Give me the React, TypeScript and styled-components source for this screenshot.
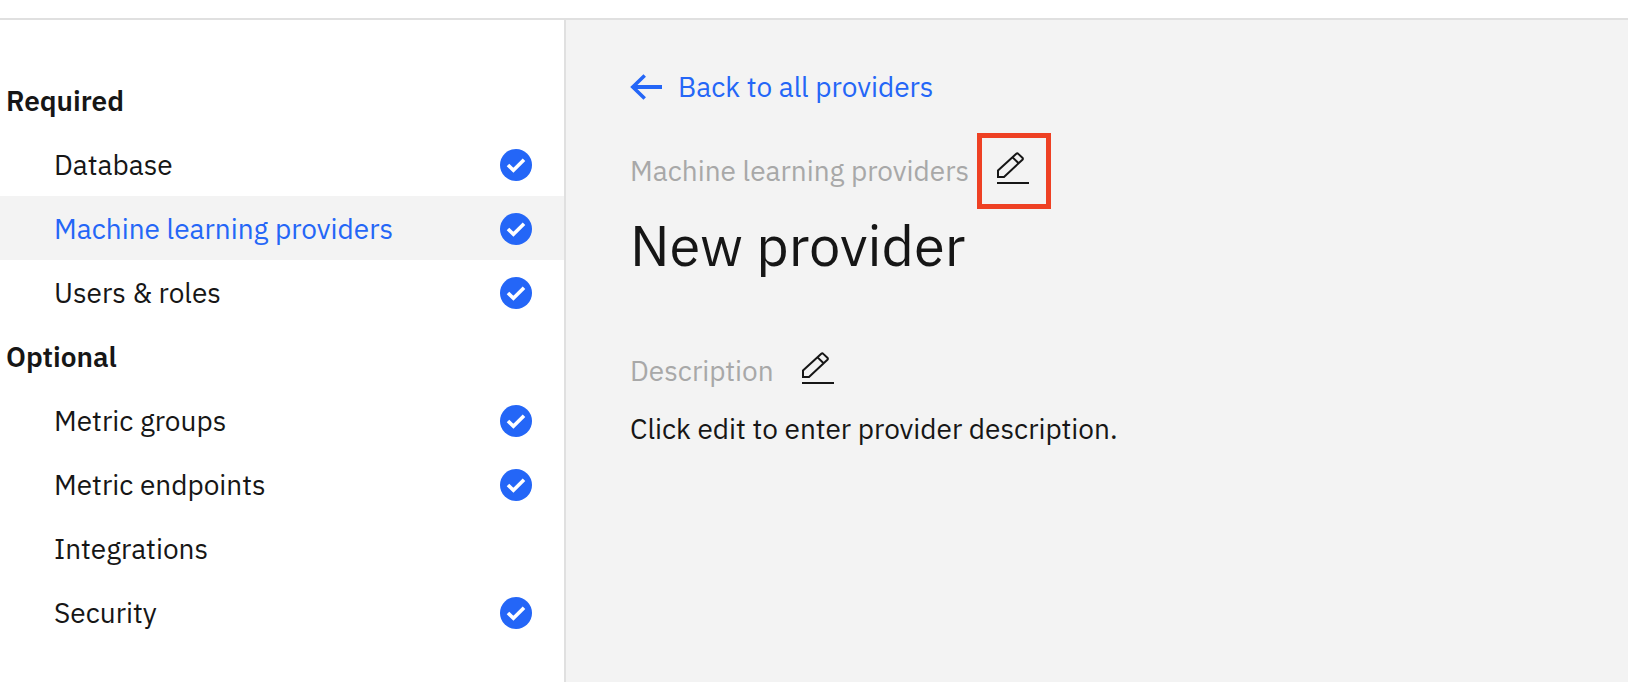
import React from "react";
import styled, { createGlobalStyle } from "styled-components";

const Global = createGlobalStyle`
  * { box-sizing: border-box; }
  body {
    margin: 0;
    background: #fff;
    color: #161616;
    font-family: "IBM Plex Sans", "Noto Sans", sans-serif;
    font-size: 28px;
    line-height: 36px;
  }
`;

const Page = styled.div`
  min-height: 100vh;
  display: flex;
  flex-direction: column;
`;

const TopBar = styled.header`
  height: 20px;
  border-bottom: 2px solid #e0e0e0;
`;

const Body = styled.div`
  flex: 1;
  display: flex;
`;

const Sidebar = styled.nav`
  flex: 0 0 566px;
  padding: 48px 0 36px;
  border-right: 2px solid #e0e0e0;
`;

const GroupTitle = styled.h2`
  margin: 0;
  padding: 15px 6px 13px;
  font-size: 28px;
  line-height: 36px;
  font-weight: 600;
`;

const List = styled.ul`
  margin: 0;
  padding: 0;
  list-style: none;
`;

const NavLink = styled.a<{ $active?: boolean }>`
  display: flex;
  align-items: center;
  justify-content: space-between;
  height: 64px;
  padding: 2px 32px 0 54px;
  color: ${(p) => (p.$active ? "#2466f7" : "#161616")};
  background: ${(p) => (p.$active ? "#f3f3f3" : "transparent")};
  text-decoration: none;
`;

const Main = styled.main`
  flex: 1;
  min-width: 0;
  padding: 49px 64px;
  background: #f3f3f3;
`;

const BackLink = styled.a`
  display: flex;
  align-items: center;
  gap: 16px;
  width: fit-content;
  margin-bottom: 28px;
  color: #2466f7;
  text-decoration: none;
`;

const LabelRow = styled.div`
  display: flex;
  align-items: center;
  gap: 8px;
  height: 76px;
`;

const Label = styled.span`
  color: #a8a8a8;
`;

const EditButton = styled.button<{ $highlighted?: boolean }>`
  display: flex;
  align-items: center;
  justify-content: center;
  width: 74px;
  height: 76px;
  padding: 0 2px 6px 0;
  border: 5px solid ${(p) => (p.$highlighted ? "#ee4023" : "transparent")};
  background: none;
  color: #161616;
`;

const Title = styled.h1`
  margin: 0 0 52px;
  font-size: 56px;
  line-height: 72px;
  font-weight: 400;
`;

const Description = styled.p`
  margin: 2px 0 0;
`;

const CheckIcon = () => (
  <svg width="32" height="32" viewBox="0 0 32 32" role="img" aria-label="Complete">
    <circle cx="16" cy="16" r="16" fill="#2466f7" />
    <path d="M8 16L13.400 21.300L24 10.700" fill="none" stroke="#fff" strokeWidth="3.600" />
  </svg>
);

const ArrowIcon = () => (
  <svg width="32" height="32" viewBox="0 0 32 32" aria-hidden="true" fill="none" stroke="currentColor">
    <path d="M32 16H3" strokeWidth="4" />
    <path d="M14.700 4.500L2.800 16L14.700 27.500" strokeWidth="3.600" />
  </svg>
);

const PencilIcon = () => (
  <svg width="32" height="32" viewBox="0 0 32 32" aria-hidden="true" fill="none" stroke="currentColor" strokeWidth="2">
    <path d="M1 25V18.500L19.300 1.800Q20.300 0.900 21.300 1.900L25.400 5.700Q26.400 6.700 25.400 7.700L7 25ZM15.600 5.400L21.600 11.200" />
    <path d="M0 31H32" />
  </svg>
);

type Item = { name: string; done: boolean; active?: boolean };

const groups: { title: string; items: Item[] }[] = [
  {
    title: "Required",
    items: [
      { name: "Database", done: true },
      { name: "Machine learning providers", done: true, active: true },
      { name: "Users & roles", done: true },
    ],
  },
  {
    title: "Optional",
    items: [
      { name: "Metric groups", done: true },
      { name: "Metric endpoints", done: true },
      { name: "Integrations", done: false },
      { name: "Security", done: true },
    ],
  },
];

export default function App() {
  return (
    <Page>
      <Global />
      <TopBar />
      <Body>
        <Sidebar aria-label="Configuration">
          {groups.map((group) => (
            <section key={group.title}>
              <GroupTitle>{group.title}</GroupTitle>
              <List>
                {group.items.map((item) => (
                  <li key={item.name}>
                    <NavLink href="#" $active={item.active} aria-current={item.active ? "page" : undefined}>
                      {item.name}
                      {item.done && <CheckIcon />}
                    </NavLink>
                  </li>
                ))}
              </List>
            </section>
          ))}
        </Sidebar>
        <Main>
          <BackLink href="#">
            <ArrowIcon />
            Back to all providers
          </BackLink>
          <LabelRow>
            <Label>Machine learning providers</Label>
            <EditButton type="button" $highlighted aria-label="Edit name">
              <PencilIcon />
            </EditButton>
          </LabelRow>
          <Title>New provider</Title>
          <LabelRow>
            <Label>Description</Label>
            <EditButton type="button" aria-label="Edit description">
              <PencilIcon />
            </EditButton>
          </LabelRow>
          <Description>Click edit to enter provider description.</Description>
        </Main>
      </Body>
    </Page>
  );
}
